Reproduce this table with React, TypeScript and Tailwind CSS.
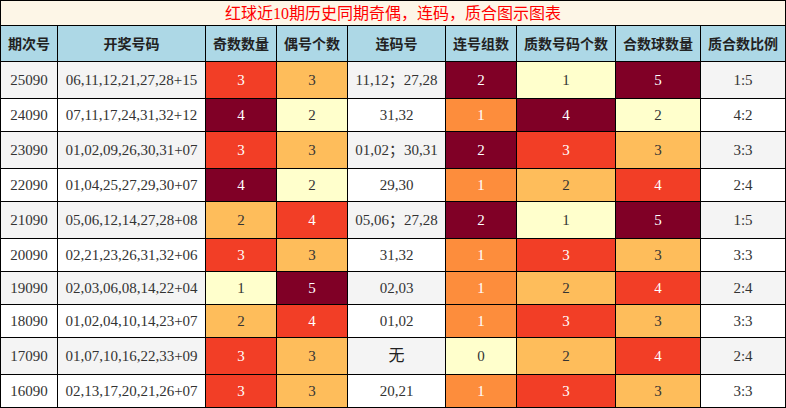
import React from "react";

type C = "dr" | "rd" | "or" | "lo" | "ly";

const cellCls: Record<C, string> = {
  dr: "bg-[#800026] text-white",
  rd: "bg-[#f23e26] text-white",
  or: "bg-[#fd8d3c] text-white",
  lo: "bg-[#febd5b] text-[#333]",
  ly: "bg-[#ffffcc] text-[#333]",
};

type Row = {
  q: string;
  n: string;
  a: [string, C];
  b: [string, C];
  l: string;
  c: [string, C];
  d: [string, C];
  e: [string, C];
  r: string;
  tall: boolean;
};

const rows: Row[] = [
  { q: "25090", n: "06,11,12,21,27,28+15", a: ["3", "rd"], b: ["3", "lo"], l: "11,12；27,28", c: ["2", "dr"], d: ["1", "ly"], e: ["5", "dr"], r: "1:5", tall: true },
  { q: "24090", n: "07,11,17,24,31,32+12", a: ["4", "dr"], b: ["2", "ly"], l: "31,32", c: ["1", "or"], d: ["4", "dr"], e: ["2", "ly"], r: "4:2", tall: false },
  { q: "23090", n: "01,02,09,26,30,31+07", a: ["3", "rd"], b: ["3", "lo"], l: "01,02；30,31", c: ["2", "dr"], d: ["3", "rd"], e: ["3", "lo"], r: "3:3", tall: true },
  { q: "22090", n: "01,04,25,27,29,30+07", a: ["4", "dr"], b: ["2", "ly"], l: "29,30", c: ["1", "or"], d: ["2", "lo"], e: ["4", "rd"], r: "2:4", tall: false },
  { q: "21090", n: "05,06,12,14,27,28+08", a: ["2", "lo"], b: ["4", "rd"], l: "05,06；27,28", c: ["2", "dr"], d: ["1", "ly"], e: ["5", "dr"], r: "1:5", tall: true },
  { q: "20090", n: "02,21,23,26,31,32+06", a: ["3", "rd"], b: ["3", "lo"], l: "31,32", c: ["1", "or"], d: ["3", "rd"], e: ["3", "lo"], r: "3:3", tall: false },
  { q: "19090", n: "02,03,06,08,14,22+04", a: ["1", "ly"], b: ["5", "dr"], l: "02,03", c: ["1", "or"], d: ["2", "lo"], e: ["4", "rd"], r: "2:4", tall: false },
  { q: "18090", n: "01,02,04,10,14,23+07", a: ["2", "lo"], b: ["4", "rd"], l: "01,02", c: ["1", "or"], d: ["3", "rd"], e: ["3", "lo"], r: "3:3", tall: false },
  { q: "17090", n: "01,07,10,16,22,33+09", a: ["3", "rd"], b: ["3", "lo"], l: "无", c: ["0", "ly"], d: ["2", "lo"], e: ["4", "rd"], r: "2:4", tall: true },
  { q: "16090", n: "02,13,17,20,21,26+07", a: ["3", "rd"], b: ["3", "lo"], l: "20,21", c: ["1", "or"], d: ["3", "rd"], e: ["3", "lo"], r: "3:3", tall: false },
];

const headers = ["期次号", "开奖号码", "奇数数量", "偶号个数", "连码号", "连号组数", "质数号码个数", "合数球数量", "质合数比例"];

export default function App() {
  return (
    <div className="w-[786px] h-[408px] bg-white">
      <div
        className="grid grid-cols-[56px_147px_70px_70px_97px_70px_98px_84px_84px] gap-px bg-black p-px w-[786px] text-[15px] text-[#333]"
        style={{ fontFamily: '"Liberation Serif", "Noto Sans CJK SC", serif' }}
      >
        <div className="col-span-9 h-[24px] bg-[#fdf6e7] flex items-center justify-center text-[16px] text-[#ff0000] leading-none pt-[1px]">
          红球近10期历史同期奇偶，连码，质合图示图表
        </div>
        {headers.map((h) => (
          <div
            key={h}
            className="h-[35px] bg-[#add8e6] flex items-center justify-center text-[14px] font-bold text-[#222]"
            style={{ fontFamily: '"Noto Sans CJK SC", sans-serif' }}
          >
            {h}
          </div>
        ))}
        {rows.map((r, i) => {
          const bg = i % 2 === 0 ? "bg-[#f4f4f4]" : "bg-white";
          const h = r.tall ? "h-[36px]" : "h-[32px]";
          const base = `${h} flex items-center justify-center`;
          return (
            <React.Fragment key={r.q}>
              <div className={`${base} ${bg}`}>{r.q}</div>
              <div className={`${base} ${bg}`}>{r.n}</div>
              <div className={`${base} ${cellCls[r.a[1]]}`}>{r.a[0]}</div>
              <div className={`${base} ${cellCls[r.b[1]]}`}>{r.b[0]}</div>
              <div className={`${base} ${bg} ${r.l === "无" ? "text-[16px] text-[#222]" : ""}`}>{r.l}</div>
              <div className={`${base} ${cellCls[r.c[1]]}`}>{r.c[0]}</div>
              <div className={`${base} ${cellCls[r.d[1]]}`}>{r.d[0]}</div>
              <div className={`${base} ${cellCls[r.e[1]]}`}>{r.e[0]}</div>
              <div className={`${base} ${bg}`}>{r.r}</div>
            </React.Fragment>
          );
        })}
      </div>
    </div>
  );
}
